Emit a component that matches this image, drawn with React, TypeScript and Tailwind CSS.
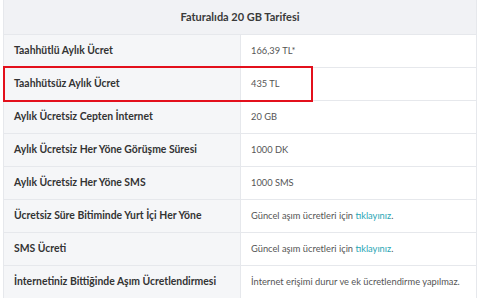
import React from 'react';

type Row = { label: string; value: React.ReactNode };

const Link = () => <span className="text-[#2aa6b5]">tıklayınız</span>;

const rows: Row[] = [
  { label: 'Taahhütlü Aylık Ücret', value: '166,39 TL*' },
  { label: 'Taahhütsüz Aylık Ücret', value: '435 TL' },
  { label: 'Aylık Ücretsiz Cepten İnternet', value: '20 GB' },
  { label: 'Aylık Ücretsiz Her Yöne Görüşme Süresi', value: '1000 DK' },
  { label: 'Aylık Ücretsiz Her Yöne SMS', value: '1000 SMS' },
  {
    label: 'Ücretsiz Süre Bitiminde Yurt İçi Her Yöne',
    value: (
      <>
        Güncel aşım ücretleri için <Link />.
      </>
    ),
  },
  {
    label: 'SMS Ücreti',
    value: (
      <>
        Güncel aşım ücretleri için <Link />.
      </>
    ),
  },
  { label: 'İnternetiniz Bittiğinde Aşım Ücretlendirmesi', value: 'İnternet erişimi durur ve ek ücretlendirme yapılmaz.' },
];

const App = () => {
  return (
    <div className="w-[480px] h-[298px] bg-white overflow-hidden font-['Lato',sans-serif]">
      <div className="relative ml-[3px] w-[474px] border border-t-0 border-[#e6e8ec]">
        {/* Header */}
        <div className="h-[35px] bg-[#f1f2f5] border-b border-[#e6e8ec] flex items-center justify-center text-[11px] font-bold text-[#3a3a3a]">
          Faturalıda 20 GB Tarifesi
        </div>

        {rows.map((row, i) => (
          <div key={i} className="grid grid-cols-[237px_1fr] h-[33px] border-b border-[#e6e8ec] last:border-b-0">
            <div className="bg-[#f5f6f8] border-r border-[#e6e8ec] flex items-center pl-[10px] text-[10.4px] font-bold text-[#333]">
              <span>{row.label}</span>
            </div>
            <div className="flex items-center pl-[10px] text-[9.3px] text-[#555]">
              <span>{row.value}</span>
            </div>
          </div>
        ))}

        {/* highlight */}
        <div className="absolute left-[-1px] top-[66px] w-[310px] h-[36px] border-2 border-[#e3101c]" />
      </div>
    </div>
  );
};

export default App;
